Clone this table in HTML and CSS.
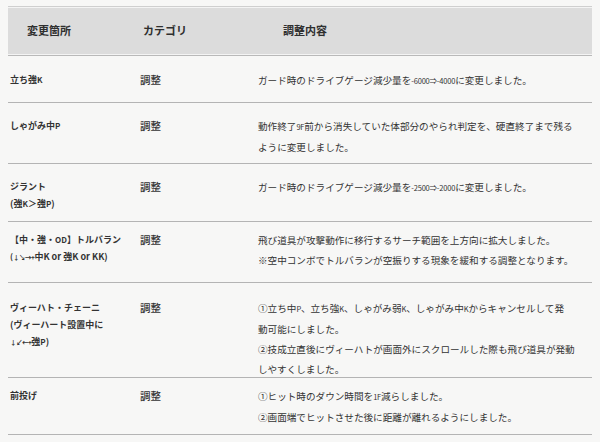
FILE: index.html
```html
<!DOCTYPE html>
<html lang="ja">
<head>
<meta charset="utf-8">
<link rel="stylesheet" href="styles.css">
</head>
<body>
<div class="table">
  <div class="head">
    <div class="h h1">変更箇所</div>
    <div class="h h2">カテゴリ</div>
    <div class="h h3">調整内容</div>
  </div>
  <div class="row r1">
    <div class="c1">立ち強<span class="lt">K</span></div>
    <div class="c2">調整</div>
    <div class="c3">ガード時のドライブゲージ減少量を<span class="num">-6000⇒-4000</span>に変更しました。</div>
  </div>
  <div class="row r2">
    <div class="c1">しゃがみ中<span class="lt">P</span></div>
    <div class="c2">調整</div>
    <div class="c3">動作終了<span class="num">9F</span>前から消失していた体部分のやられ判定を、硬直終了まで残る<br>ように変更しました。</div>
  </div>
  <div class="row r3">
    <div class="c1">ジラント<br>(強<span class="lt">K</span>＞強<span class="lt">P</span>)</div>
    <div class="c2">調整</div>
    <div class="c3">ガード時のドライブゲージ減少量を<span class="num">-2500⇒-2000</span>に変更しました。</div>
  </div>
  <div class="row r4">
    <div class="c1">【中・強・<span class="lt">OD</span>】トルバラン<br><span class="lt">(<span class="arr">↓↘→+</span></span>中K or 強K or KK)</div>
    <div class="c2">調整</div>
    <div class="c3">飛び道具が攻撃動作に移行するサーチ範囲を上方向に拡大しました。<br>※空中コンボでトルバランが空振りする現象を緩和する調整となります。</div>
  </div>
  <div class="row r5">
    <div class="c1">ヴィーハト・チェーニ<br>(ヴィーハート設置中に<br><span class="arr">↓↙←+</span>強<span class="lt">P</span>)</div>
    <div class="c2">調整</div>
    <div class="c3">①立ち中<span class="num">P</span>、立ち強<span class="num">K</span>、しゃがみ弱<span class="num">K</span>、しゃがみ中<span class="num">K</span>からキャンセルして発<br>動可能にしました。<br>②技成立直後にヴィーハトが画面外にスクロールした際も飛び道具が発動<br>しやすくしました。</div>
  </div>
  <div class="row r6">
    <div class="c1">前投げ</div>
    <div class="c2">調整</div>
    <div class="c3">①ヒット時のダウン時間を<span class="num">1F</span>減らしました。<br>②画面端でヒットさせた後に距離が離れるようにしました。</div>
  </div>
</div>
</body>
</html>
```
FILE: styles.css
```css
html, body {
  margin: 0;
  padding: 0;
  background: #f7f7f6;
}
body {
  font-family: "Noto Sans CJK JP", "Noto Sans", sans-serif;
  color: #333;
  width: 600px;
  height: 442px;
  overflow: hidden;
}
.table {
  margin: 6px 8px 0 8px;
  width: 584px;
}
.head {
  display: grid;
  grid-template-columns: 129px 118px 1fr;
  align-items: center;
  height: 48px;
  background: #dcdcdc;
  border-top: 1px solid #cfcfcf;
  border-bottom: 1px solid #b9b9b9;
  box-shadow: inset 0 1px 0 #f4f4f4, inset 0 -1px 0 #f4f4f4;
}
.h {
  font-size: 11px;
  font-weight: 700;
  color: #2f2f2f;
  padding-bottom: 2px;
}
.h1 { padding-left: 19px; }
.h2 { padding-left: 6px; }
.h3 { padding-left: 28px; }
.row {
  display: grid;
  grid-template-columns: 129px 118px 1fr;
  align-items: start;
  padding: 12px 0 10px 0;
  border-bottom: 1px solid #b4b4b4;
  box-sizing: border-box;
}
.c1 {
  padding-left: 2px;
  font-size: 9px;
  font-weight: 700;
  line-height: 17px;
  padding-top: 1px;
}
.c2 {
  padding-left: 3px;
  font-size: 10.5px;
  font-weight: 500;
  line-height: 19px;
}
.c3 {
  padding-left: 3px;
  font-size: 9.6px;
  line-height: 20px;
}
.num {
  font-size: 7.5px;
  letter-spacing: -0.2px;
}
.lt {
  font-size: 8px;
}
.arr {
  font-size: 6.5px;
  letter-spacing: -0.5px;
}
.r1 { height: 47px; padding-top: 14px; }
.r2 { height: 61px; padding-top: 13px; }
.r3 { height: 58px; padding-top: 13px; }
.r4 { height: 61px; padding-top: 8px; }
.r5 { height: 95px; padding-top: 15px; }
.r6 { height: 57px; padding-top: 8px; }
```
